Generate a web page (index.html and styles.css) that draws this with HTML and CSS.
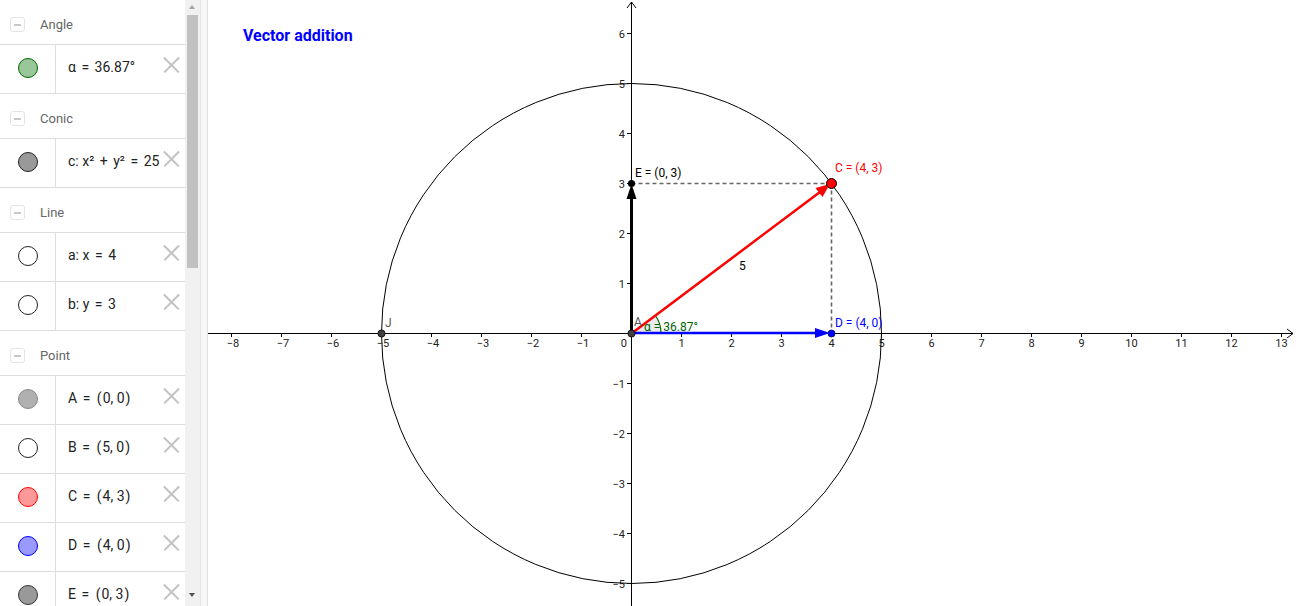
FILE: index.html
```html
<!DOCTYPE html>
<html>
<head>
<meta charset="utf-8">
<link rel="stylesheet" href="styles.css">
</head>
<body>
<div class="app">
  <div class="algebra">
    <div class="list">
      <div class="group"><span class="toggle"></span><span class="gname">Angle</span></div>
      <div class="item"><div class="mcell"><span class="marker m-angle"></span></div><div class="expr">α<span class="op">=</span>36.87°</div><span class="close"></span></div>
      <div class="group"><span class="toggle"></span><span class="gname">Conic</span></div>
      <div class="item"><div class="mcell"><span class="marker m-conic"></span></div><div class="expr">c: x²<span class="op">+</span>y²<span class="op">=</span>25</div><span class="close"></span></div>
      <div class="group"><span class="toggle"></span><span class="gname">Line</span></div>
      <div class="item"><div class="mcell"><span class="marker m-white"></span></div><div class="expr">a: x<span class="op">=</span>4</div><span class="close"></span></div>
      <div class="item"><div class="mcell"><span class="marker m-white"></span></div><div class="expr">b: y<span class="op">=</span>3</div><span class="close"></span></div>
      <div class="group"><span class="toggle"></span><span class="gname">Point</span></div>
      <div class="item"><div class="mcell"><span class="marker m-a"></span></div><div class="expr">A<span class="op">=</span><span class="par">(</span>0, 0<span class="par">)</span></div><span class="close"></span></div>
      <div class="item"><div class="mcell"><span class="marker m-white"></span></div><div class="expr">B<span class="op">=</span><span class="par">(</span>5, 0<span class="par">)</span></div><span class="close"></span></div>
      <div class="item"><div class="mcell"><span class="marker m-c"></span></div><div class="expr">C<span class="op">=</span><span class="par">(</span>4, 3<span class="par">)</span></div><span class="close"></span></div>
      <div class="item"><div class="mcell"><span class="marker m-d"></span></div><div class="expr">D<span class="op">=</span><span class="par">(</span>4, 0<span class="par">)</span></div><span class="close"></span></div>
      <div class="item"><div class="mcell"><span class="marker m-e"></span></div><div class="expr">E<span class="op">=</span><span class="par">(</span>0, 3<span class="par">)</span></div><span class="close"></span></div>
    </div>
  </div>
  <div class="scrollbar">
    <span class="arrow-up"></span>
    <span class="thumb"></span>
    <span class="arrow-down"></span>
  </div>
  <div class="divider"></div>
  <div class="graph">
    <svg class="canvas" width="1088" height="606" viewBox="208 0 1088 606" xmlns="http://www.w3.org/2000/svg">
      <text x="243" y="41" class="title">Vector addition</text>
      <path d="M631 333 L661 333 A30 30 0 0 0 655 315 Z" fill="#e6e6e6" fill-opacity="0.8" stroke="none"/>
      <path d="M661 333 A30 30 0 0 0 655 315" fill="none" stroke="#006400" stroke-width="1.2"/>
      <g stroke="#000" stroke-width="1" fill="none">
        <line x1="208" y1="333.5" x2="1293" y2="333.5"/>
        <path d="M1287 329 L1293 333.5 L1287 338"/>
        <line x1="631.5" y1="2" x2="631.5" y2="606"/>
        <path d="M627 8 L631.5 2 L636 8"/>
      </g>
      <g stroke="#000" stroke-width="1">
        <line x1="231.5" y1="333" x2="231.5" y2="337"/>
        <line x1="281.5" y1="333" x2="281.5" y2="337"/>
        <line x1="331.5" y1="333" x2="331.5" y2="337"/>
        <line x1="381.5" y1="333" x2="381.5" y2="337"/>
        <line x1="431.5" y1="333" x2="431.5" y2="337"/>
        <line x1="481.5" y1="333" x2="481.5" y2="337"/>
        <line x1="531.5" y1="333" x2="531.5" y2="337"/>
        <line x1="581.5" y1="333" x2="581.5" y2="337"/>
        <line x1="681.5" y1="333" x2="681.5" y2="337"/>
        <line x1="731.5" y1="333" x2="731.5" y2="337"/>
        <line x1="781.5" y1="333" x2="781.5" y2="337"/>
        <line x1="831.5" y1="333" x2="831.5" y2="337"/>
        <line x1="881.5" y1="333" x2="881.5" y2="337"/>
        <line x1="931.5" y1="333" x2="931.5" y2="337"/>
        <line x1="981.5" y1="333" x2="981.5" y2="337"/>
        <line x1="1031.5" y1="333" x2="1031.5" y2="337"/>
        <line x1="1081.5" y1="333" x2="1081.5" y2="337"/>
        <line x1="1131.5" y1="333" x2="1131.5" y2="337"/>
        <line x1="1181.5" y1="333" x2="1181.5" y2="337"/>
        <line x1="1231.5" y1="333" x2="1231.5" y2="337"/>
        <line x1="1281.5" y1="333" x2="1281.5" y2="337"/>
        <line x1="627" y1="33.5" x2="631" y2="33.5"/>
        <line x1="627" y1="83.5" x2="631" y2="83.5"/>
        <line x1="627" y1="133.5" x2="631" y2="133.5"/>
        <line x1="627" y1="183.5" x2="631" y2="183.5"/>
        <line x1="627" y1="233.5" x2="631" y2="233.5"/>
        <line x1="627" y1="283.5" x2="631" y2="283.5"/>
        <line x1="627" y1="383.5" x2="631" y2="383.5"/>
        <line x1="627" y1="433.5" x2="631" y2="433.5"/>
        <line x1="627" y1="483.5" x2="631" y2="483.5"/>
        <line x1="627" y1="533.5" x2="631" y2="533.5"/>
        <line x1="627" y1="583.5" x2="631" y2="583.5"/>
      </g>
      <g class="ticklabel" text-anchor="middle">
        <text x="233" y="347">−8</text>
        <text x="283" y="347">−7</text>
        <text x="333" y="347">−6</text>
        <text x="383" y="347">−5</text>
        <text x="433" y="347">−4</text>
        <text x="483" y="347">−3</text>
        <text x="533" y="347">−2</text>
        <text x="583" y="347">−1</text>
        <text x="681.5" y="347">1</text>
        <text x="731.5" y="347">2</text>
        <text x="781.5" y="347">3</text>
        <text x="831.5" y="347">4</text>
        <text x="881.5" y="347">5</text>
        <text x="931.5" y="347">6</text>
        <text x="981.5" y="347">7</text>
        <text x="1031.5" y="347">8</text>
        <text x="1081.5" y="347">9</text>
        <text x="1131.5" y="347">10</text>
        <text x="1181.5" y="347">11</text>
        <text x="1231.5" y="347">12</text>
        <text x="1281.5" y="347">13</text>
      </g>
      <g class="ticklabel" text-anchor="end">
        <text x="627" y="347">0</text>
        <text x="625" y="37.5">6</text>
        <text x="625" y="87.5">5</text>
        <text x="625" y="137.5">4</text>
        <text x="625" y="187.5">3</text>
        <text x="625" y="237.5">2</text>
        <text x="625" y="287.5">1</text>
        <text x="625" y="387.5">−1</text>
        <text x="625" y="437.5">−2</text>
        <text x="625" y="487.5">−3</text>
        <text x="625" y="537.5">−4</text>
        <text x="625" y="587.5">−5</text>
      </g>
      <circle cx="631.5" cy="333.5" r="250" fill="none" stroke="#000" stroke-width="1"/>
      <g stroke="#666" stroke-width="1.6" stroke-dasharray="4 3" fill="none">
        <line x1="631.5" y1="183.5" x2="831.5" y2="183.5"/>
        <line x1="831.5" y1="183.5" x2="831.5" y2="333.5"/>
      </g>
      <line x1="631.5" y1="333.5" x2="631.5" y2="196" stroke="#000" stroke-width="3"/>
      <polygon points="631.5,184 626.5,199 636.5,199" fill="#000"/>
      <line x1="631.5" y1="333.5" x2="820" y2="192" stroke="#ff0000" stroke-width="2.5"/>
      <polygon points="830,184 822.5,197 815.5,188" fill="#ff0000"/>
      <line x1="631.5" y1="333" x2="818" y2="333" stroke="#0000ff" stroke-width="2.5"/>
      <polygon points="830,333 815,328 815,338" fill="#0000ff"/>
      <circle cx="381.5" cy="333.5" r="3.6" fill="#404040" stroke="#000" stroke-width="0.8"/>
      <circle cx="631.5" cy="333.5" r="3.6" fill="#404040" stroke="#000" stroke-width="0.8"/>
      <circle cx="631.5" cy="183.5" r="3.6" fill="#000"/>
      <circle cx="831.5" cy="333.5" r="3.6" fill="#0000ff" stroke="#000033" stroke-width="0.6"/>
      <circle cx="831.5" cy="183.5" r="5" fill="#ff0000" stroke="#000" stroke-width="1"/>
      <text x="385" y="327" class="lbl gray">J</text>
      <text x="634" y="326" class="lbl gray">A</text>
      <text x="644" y="331" class="lbl green">α = 36.87°</text>
      <text x="635" y="177" class="lbl">E = (0, 3)</text>
      <text x="835" y="172" class="lbl red">C = (4, 3)</text>
      <text x="835" y="327" class="lbl blue">D = (4, 0)</text>
      <text x="739" y="270" class="lbl">5</text>
    </svg>
  </div>
</div>
</body>
</html>
```
FILE: styles.css
```css
html, body {
  margin: 0;
  padding: 0;
  background: #fff;
  overflow: hidden;
}
body {
  font-family: Roboto, "Liberation Sans", sans-serif;
}
.app {
  display: flex;
  width: 1296px;
  height: 606px;
}
.algebra {
  width: 185px;
  height: 606px;
  overflow: hidden;
  background: #fff;
}
.list {
  display: flex;
  flex-direction: column;
}
.group {
  height: 45px;
  box-sizing: border-box;
  border-bottom: 1px solid #dddddd;
  display: flex;
  align-items: center;
  flex-shrink: 0;
  padding-top: 5px;
}
.toggle {
  width: 15px;
  height: 15px;
  margin-left: 10px;
  margin-right: 15px;
  border: 1px solid #e4e4e4;
  border-radius: 3px;
  position: relative;
  box-sizing: border-box;
}
.toggle::after {
  content: "";
  position: absolute;
  left: 3px;
  top: 6px;
  width: 7px;
  height: 1.5px;
  background: #c8c8c8;
}
.gname {
  font-size: 13px;
  color: #666;
}
.item {
  height: 49px;
  box-sizing: border-box;
  border-bottom: 1px solid #dddddd;
  display: flex;
  align-items: center;
  position: relative;
  flex-shrink: 0;
}
.mcell {
  width: 56px;
  height: 48px;
  border-right: 1px solid #dddddd;
  display: flex;
  align-items: center;
  justify-content: center;
  box-sizing: border-box;
}
.marker {
  width: 18px;
  height: 18px;
  border-radius: 50%;
  border: 1px solid #000;
  margin-left: 1px;
  margin-top: -2px;
}
.m-angle { background: #99c799; border-color: #006400; }
.m-conic { background: #999999; border-color: #222; }
.m-white { background: #fff; border-color: #222; }
.m-a { background: #b0b0b0; border-color: #888; }
.m-c { background: #ff9999; border-color: #ff0000; }
.m-d { background: #9999ff; border-color: #0000ff; }
.m-e { background: #999999; border-color: #333; }
.expr {
  padding-left: 12px;
  font-size: 14px;
  color: #222;
  white-space: nowrap;
  margin-top: -4px;
}
.op {
  margin: 0 5.5px;
}
.par {
  margin: 0 1px;
}
.close {
  position: absolute;
  left: 163px;
  top: 12px;
  width: 16px;
  height: 16px;
}
.close::before, .close::after {
  content: "";
  position: absolute;
  left: -2px;
  top: 7px;
  width: 21px;
  height: 1.5px;
  background: #c2c2c2;
}
.close::before { transform: rotate(45deg); }
.close::after { transform: rotate(-45deg); }
.scrollbar {
  width: 15px;
  height: 606px;
  background: #f1f1f1;
  position: relative;
  flex-shrink: 0;
}
.thumb {
  position: absolute;
  left: 2px;
  top: 15px;
  width: 11px;
  height: 253px;
  background: #c1c1c1;
}
.arrow-up {
  position: absolute;
  left: 4px;
  top: 5px;
  border-left: 3.5px solid transparent;
  border-right: 3.5px solid transparent;
  border-bottom: 4px solid #a3a3a3;
}
.arrow-down {
  position: absolute;
  left: 4px;
  top: 593px;
  border-left: 3.5px solid transparent;
  border-right: 3.5px solid transparent;
  border-top: 4px solid #505050;
}
.divider {
  width: 6px;
  height: 606px;
  background: #f7f7f7;
  border-left: 1px solid #e6e6e6;
  border-right: 1px solid #e0e0e0;
  flex-shrink: 0;
}
.graph {
  flex: 1;
  height: 606px;
  overflow: hidden;
}
.canvas {
  display: block;
}
.title {
  font-family: Roboto, "Liberation Sans", sans-serif;
  font-weight: bold;
  font-size: 16px;
  fill: #0000ff;
}
.ticklabel {
  font-family: Roboto, "Liberation Sans", sans-serif;
  font-size: 11px;
  fill: #222;
}
.lbl {
  font-family: Roboto, "Liberation Sans", sans-serif;
  font-size: 12px;
  fill: #000;
}
.lbl.gray { fill: #555; }
.lbl.green { fill: #006400; }
.lbl.red { fill: #ff0000; }
.lbl.blue { fill: #0000ff; }
```
